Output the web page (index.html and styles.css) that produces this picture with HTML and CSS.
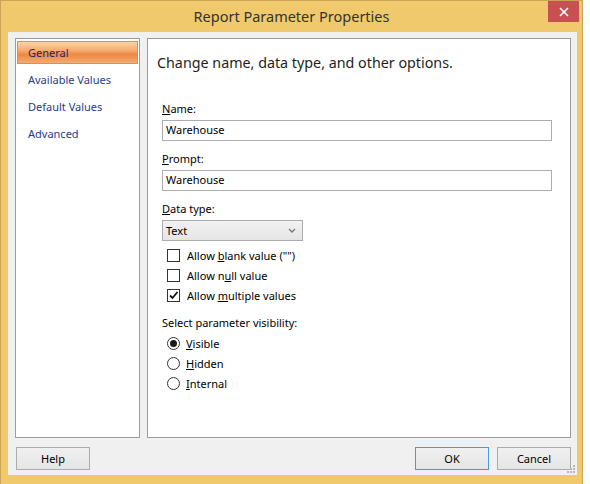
FILE: index.html
```html
<!DOCTYPE html>
<html lang="en">
<head>
    <meta charset="UTF-8">
    <title>Report Parameter Properties</title>
    <link rel="stylesheet" href="styles.css">
</head>
<body>

<div class="window">
    <div class="titlebar">
        <div class="title">Report Parameter Properties</div>
        <div class="close-button">
            <svg width="10" height="10" viewBox="0 0 10 10"><path d="M1 1 L9 9 M9 1 L1 9" stroke="#fff" stroke-width="1.6"/></svg>
        </div>
    </div>

    <div class="client">
        <div class="panels">
            <ul class="nav-list">
                <li class="nav-item selected">General</li>
                <li class="nav-item">Available Values</li>
                <li class="nav-item">Default Values</li>
                <li class="nav-item">Advanced</li>
            </ul>

            <div class="content">
                <h1 class="heading">Change name, data type, and other options.</h1>

                <div class="field-label"><u>N</u>ame:</div>
                <div class="textbox">Warehouse</div>

                <div class="field-label"><u>P</u>rompt:</div>
                <div class="textbox">Warehouse</div>

                <div class="field-label"><u>D</u>ata type:</div>
                <div class="combo">
                    <span>Text</span>
                    <svg width="8" height="5" viewBox="0 0 8 5"><path d="M1 1 L4 4 L7 1" fill="none" stroke="#777" stroke-width="1.3"/></svg>
                </div>

                <div class="options">
                    <div class="option"><span class="check"></span><span>Allow <u>b</u>lank value ("")</span></div>
                    <div class="option"><span class="check"></span><span>Allow n<u>u</u>ll value</span></div>
                    <div class="option">
                        <span class="check">
                            <svg width="11" height="11" viewBox="0 0 11 11"><path d="M2 5.5 L4.5 8 L9.5 2" fill="none" stroke="#111" stroke-width="1.8"/></svg>
                        </span>
                        <span>Allow <u>m</u>ultiple values</span>
                    </div>
                </div>

                <div class="field-label group-label">Select parameter visibility:</div>
                <div class="options">
                    <div class="option"><span class="radio checked"></span><span><u>V</u>isible</span></div>
                    <div class="option"><span class="radio"></span><span><u>H</u>idden</span></div>
                    <div class="option"><span class="radio"></span><span><u>I</u>nternal</span></div>
                </div>
            </div>
        </div>

        <div class="footer">
            <button class="btn">Help</button>
            <div class="footer-right">
                <button class="btn default">OK</button>
                <button class="btn">Cancel</button>
            </div>
        </div>

        <svg class="grip" width="9" height="9" viewBox="0 0 9 9">
            <rect x="6" y="0" width="2" height="2" fill="#b8b8b8"/>
            <rect x="3" y="3" width="2" height="2" fill="#b8b8b8"/>
            <rect x="6" y="3" width="2" height="2" fill="#b8b8b8"/>
            <rect x="0" y="6" width="2" height="2" fill="#b8b8b8"/>
            <rect x="3" y="6" width="2" height="2" fill="#b8b8b8"/>
            <rect x="6" y="6" width="2" height="2" fill="#b8b8b8"/>
        </svg>
    </div>
</div>

</body>
</html>
```

FILE: styles.css
```css
* {
    box-sizing: border-box;
    margin: 0;
    padding: 0;
}
body {
    background-color: #fff;
    font-family: "Segoe UI", "Noto Sans", sans-serif;
    font-size: 11px;
    color: #000;
}
.window {
    width: 583px;
    height: 490px;
    background-color: #f0c96c;
    border: 1px solid #c9a456;
    overflow: hidden;
}
.titlebar {
    position: relative;
    height: 31px;
}
.title {
    text-align: center;
    font-size: 14.5px;
    line-height: 31px;
    color: #333;
}
.close-button {
    position: absolute;
    top: 0;
    right: 3px;
    width: 31px;
    height: 21px;
    background-color: #c75050;
    display: flex;
    align-items: center;
    justify-content: center;
}
.client {
    position: relative;
    margin: 0 5px 0 7px;
    height: 443px;
    background-color: #f0f0f0;
    padding: 6px 6px 0 7px;
}
.panels {
    display: flex;
    gap: 7px;
    height: 400px;
}
.nav-list {
    list-style: none;
    width: 125px;
    background-color: #fff;
    border: 1px solid #9c9c9c;
    padding: 2px 1px;
    display: flex;
    flex-direction: column;
    gap: 4px;
}
.nav-item {
    height: 23px;
    line-height: 21px;
    padding-left: 10px;
    color: #1f3c8c;
    border: 1px solid transparent;
}
.nav-item.selected {
    color: #14286a;
    border-color: #c8975e;
    background: linear-gradient(#fcd3ab 0%, #f6ab70 40%, #ed8743 60%, #f4ac73 100%);
}
.content {
    flex: 1;
    background-color: #fff;
    border: 1px solid #9c9c9c;
    padding: 14px 18px 0 14px;
}
.heading {
    font-size: 14.3px;
    font-weight: normal;
    line-height: 20px;
    color: #1e1e1e;
    margin: 0 0 27px -5px;
}
.field-label {
    line-height: 17px;
    margin-bottom: 3px;
}
.textbox {
    height: 21px;
    border: 1px solid #abadb3;
    padding-left: 3px;
    line-height: 18px;
    margin-bottom: 9px;
}
.combo {
    width: 141px;
    height: 21px;
    border: 1px solid #acacac;
    background: linear-gradient(#f2f2f2, #e5e5e5);
    display: flex;
    align-items: center;
    justify-content: space-between;
    padding: 0 6px 0 3px;
    margin-bottom: 4px;
}
.options {
    padding-left: 5px;
}
.option {
    display: flex;
    align-items: center;
    height: 20px;
}
.check {
    width: 13px;
    height: 13px;
    border: 1px solid #333;
    background-color: #fff;
    margin-right: 7px;
    display: flex;
    align-items: center;
    justify-content: center;
}
.radio {
    width: 13px;
    height: 13px;
    border: 1px solid #333;
    border-radius: 50%;
    background-color: #fff;
    margin-right: 6px;
    display: flex;
    align-items: center;
    justify-content: center;
}
.radio.checked::after {
    content: "";
    width: 7px;
    height: 7px;
    border-radius: 50%;
    background-color: #1a1a1a;
}
.group-label {
    margin-top: 9px;
    margin-bottom: 2px;
}
.footer {
    display: flex;
    justify-content: space-between;
    margin-top: 9px;
    padding-left: 1px;
}
.footer-right {
    display: flex;
    gap: 8px;
}
.btn {
    width: 74px;
    height: 23px;
    font-family: inherit;
    font-size: 11px;
    color: #000;
    border: 1px solid #acacac;
    background: linear-gradient(#f0f0f0, #e5e5e5);
}
.btn.default {
    border-color: #3d9be9;
}
.grip {
    position: absolute;
    right: 1px;
    bottom: 1px;
}
```
